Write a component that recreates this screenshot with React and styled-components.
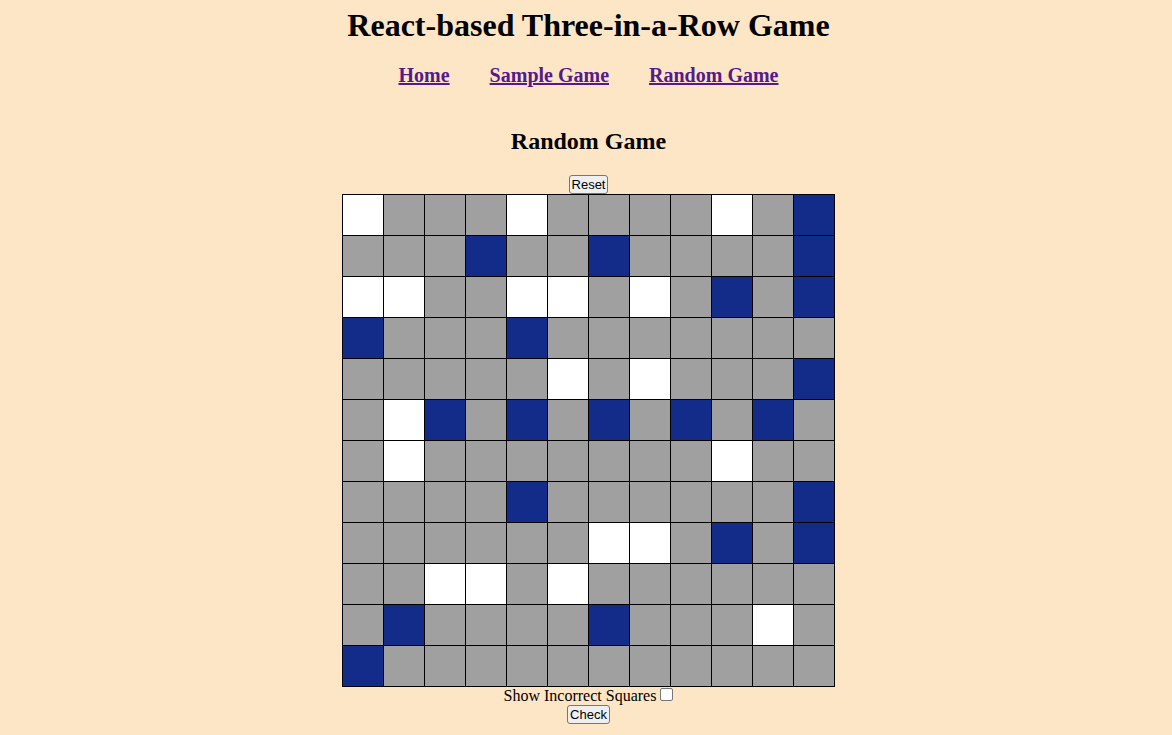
import React from "react";
import styled, { createGlobalStyle } from "styled-components";

const GlobalStyle = createGlobalStyle`
	body {
		margin: 0;
		background: #fde6c6;
		font-family: "Liberation Serif", "Times New Roman", serif;
		color: #000;
	}
`;

const Page = styled.div`
	display: flex;
	flex-direction: column;
	align-items: center;
	padding: 7px 0 0 5px;
`;

const Title = styled.h1`
	margin: 0;
	font-size: 32px;
	font-weight: 700;
	line-height: 37px;
`;

const Nav = styled.nav`
	display: flex;
	gap: 40px;
	margin-top: 20px;
`;

const NavLink = styled.a`
	font-size: 20px;
	font-weight: 700;
	line-height: 23px;
	color: #551a8b;
	text-decoration: underline;
`;

const Heading = styled.h2`
	margin: 40px 0 0;
	font-size: 24px;
	font-weight: 700;
	line-height: 28px;
`;

const Button = styled.button`
	font-family: "Liberation Sans", Arial, sans-serif;
	font-size: 13px;
	line-height: 15px;
	padding: 1px 2px;
	margin-top: ${({ $top }) => $top || 0}px;
	border: 1px solid #767676;
	border-radius: 3px;
	background: #efefef;
	color: #000;
`;

const Board = styled.div`
	display: grid;
	grid-template-columns: repeat(12, 40px);
	grid-auto-rows: 40px;
	gap: 1px;
	padding: 1px;
	background: #000;
`;

const colors = {
	W: "#ffffff",
	G: "#a0a0a0",
	B: "#132c8a",
};

const Cell = styled.div`
	background: ${({ $state }) => colors[$state]};
`;

const Option = styled.label`
	display: flex;
	align-items: center;
	gap: 4px;
	font-size: 16px;
	line-height: 18px;
`;

const Box = styled.span`
	display: inline-block;
	width: 11px;
	height: 11px;
	border: 1px solid #767676;
	border-radius: 2px;
	background: #fff;
	margin-top: -3px;
`;

const rows = [
	"WGGGWGGGGWGB",
	"GGGBGGBGGGGB",
	"WWGGWWGWGBGB",
	"BGGGBGGGGGGG",
	"GGGGGWGWGGGB",
	"GWBGBGBGBGBG",
	"GWGGGGGGGWGG",
	"GGGGBGGGGGGB",
	"GGGGGGWWGBGB",
	"GGWWGWGGGGGG",
	"GBGGGGBGGGWG",
	"BGGGGGGGGGGG",
];

const App = () => {
	return (
		<>
			<GlobalStyle />
			<Page>
				<Title>React-based Three-in-a-Row Game</Title>
				<Nav>
					<NavLink href="#">Home</NavLink>
					<NavLink href="#">Sample Game</NavLink>
					<NavLink href="#">Random Game</NavLink>
				</Nav>
				<Heading>Random Game</Heading>
				<Button $top={20}>Reset</Button>
				<Board>
					{rows.map((row, r) =>
						row.split("").map((s, c) => <Cell key={r + "-" + c} $state={s} />)
					)}
				</Board>
				<Option>
					Show Incorrect Squares <Box />
				</Option>
				<Button>Check</Button>
			</Page>
		</>
	);
};

export default App;
